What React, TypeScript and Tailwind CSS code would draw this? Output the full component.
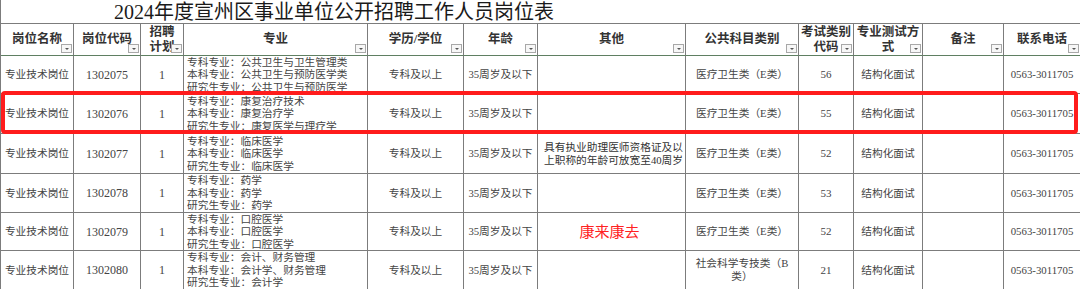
import React from "react";

const COLS =
  "grid-cols-[73px_67px_43px_184px_96px_74px_148px_113px_55px_69px_81px_77px]";
const ROWS = "grid-rows-[32px_38px_40px_40px_39px_38px_39px]";

const headers: string[][] = [
  ["岗位名称"],
  ["岗位代码"],
  ["招聘", "计划"],
  ["专业"],
  ["学历/学位"],
  ["年龄"],
  ["其他"],
  ["公共科目类别"],
  ["考试类别", "代码"],
  ["专业测试方", "式"],
  ["备注"],
  ["联系电话"],
];

interface Post {
  code: string;
  majors: string[];
  other?: string[];
  red?: string;
  subject: string[];
  examCode: string;
}

const posts: Post[] = [
  {
    code: "1302075",
    majors: ["专科专业：公共卫生与卫生管理类", "本科专业：公共卫生与预防医学类", "研究生专业：公共卫生与预防医学"],
    subject: ["医疗卫生类（E类）"],
    examCode: "56",
  },
  {
    code: "1302076",
    majors: ["专科专业：康复治疗技术", "本科专业：康复治疗学", "研究生专业：康复医学与理疗学"],
    subject: ["医疗卫生类（E类）"],
    examCode: "55",
  },
  {
    code: "1302077",
    majors: ["专科专业：临床医学", "本科专业：临床医学", "研究生专业：临床医学"],
    other: ["具有执业助理医师资格证及以", "上职称的年龄可放宽至40周岁"],
    subject: ["医疗卫生类（E类）"],
    examCode: "52",
  },
  {
    code: "1302078",
    majors: ["专科专业：药学", "本科专业：药学", "研究生专业：药学"],
    subject: ["医疗卫生类（E类）"],
    examCode: "53",
  },
  {
    code: "1302079",
    majors: ["专科专业：口腔医学", "本科专业：口腔医学", "研究生专业：口腔医学"],
    red: "康来康去",
    subject: ["医疗卫生类（E类）"],
    examCode: "52",
  },
  {
    code: "1302080",
    majors: ["专科专业：会计、财务管理", "本科专业：会计学、财务管理", "研究生专业：会计学"],
    subject: ["社会科学专技类（B", "类）"],
    examCode: "21",
  },
];

function Cell({ children, className = "" }: { children?: React.ReactNode; className?: string }) {
  return (
    <div
      className={`relative flex flex-col items-center justify-center overflow-hidden border-r border-b border-[#7c7c7c] text-center ${className}`}
    >
      {children}
    </div>
  );
}

function FilterButton() {
  return (
    <span className="absolute right-[1px] bottom-[2px] flex h-[9px] w-[11px] items-center justify-center border border-[#a8a8a8] bg-[#f7f7f7]">
      <span className="h-0 w-0 border-x-[2px] border-t-[2px] border-x-transparent border-t-[#555]" />
    </span>
  );
}

export default function App() {
  return (
    <div className="relative h-[289px] w-[1080px] overflow-hidden bg-white font-['Liberation_Serif','Noto_Sans_CJK_SC',serif] text-[10.7px] text-[#444]">
      {/* title */}
      <div className="flex h-[23px] items-center border-l border-[#7c7c7c] pl-[113px] text-[20px] leading-none text-[#1a1a1a]">
        2024年度宣州区事业单位公开招聘工作人员岗位表
      </div>

      <div className={`grid ${COLS} ${ROWS} border-t border-l border-[#7c7c7c]`}>
        {headers.map((lines, i) => (
          <Cell key={i} className="border-b-[#5f7f62] text-[12.5px] leading-[15px] font-bold text-[#333]">
            {lines.map((l) => (
              <span key={l}>{l}</span>
            ))}
            <FilterButton />
          </Cell>
        ))}

        {posts.map((p) => (
          <React.Fragment key={p.code}>
            <Cell>专业技术岗位</Cell>
            <Cell className="text-[12px]">{p.code}</Cell>
            <Cell className="text-[12px]">1</Cell>
            <Cell className="items-start pl-[3px] text-left leading-[12.5px]">
              {p.majors.map((m) => (
                <span key={m} className="whitespace-nowrap">
                  {m}
                </span>
              ))}
            </Cell>
            <Cell>专科及以上</Cell>
            <Cell>35周岁及以下</Cell>
            <Cell className="items-start pl-[6px] text-left leading-[12.5px] text-[#333]">
              {p.other?.map((o) => (
                <span key={o} className="whitespace-nowrap">
                  {o}
                </span>
              ))}
              {p.red && (
                <span className="self-center pr-[10px] font-['Noto_Sans_CJK_SC',sans-serif] text-[15px] text-[#ff2222]">
                  {p.red}
                </span>
              )}
            </Cell>
            <Cell className="leading-[13px]">
              {p.subject.map((s) => (
                <span key={s} className="whitespace-nowrap">
                  {s}
                </span>
              ))}
            </Cell>
            <Cell className="text-[11px]">{p.examCode}</Cell>
            <Cell>结构化面试</Cell>
            <Cell />
            <Cell className="text-[10.8px]">0563-3011705</Cell>
          </React.Fragment>
        ))}
      </div>

      {/* red highlight box over the 1302076 row */}
      <div className="pointer-events-none absolute top-[91px] left-[1px] h-[43px] w-[1077px] rounded-[4px] border-[4px] border-[#ff1c1c]" />
    </div>
  );
}
